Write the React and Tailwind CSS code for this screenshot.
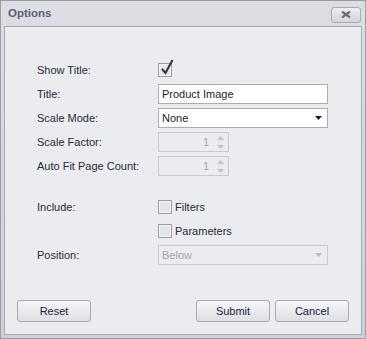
import React from 'react';

const font = { fontFamily: '"Liberation Sans", Arial, sans-serif' };

function Label({ children }) {
    return <div className="flex items-center h-[20px] text-[11px] text-[#272a38]">{children}</div>;
}

function TextBox({ value }) {
    return (
        <div className="flex items-center h-[20px] w-[170px] bg-white border border-[#abadb5] px-[3px] text-[11px] text-[#1f2230]">
            {value}
        </div>
    );
}

function Combo({ value, disabled }) {
    return (
        <div
            className={`flex items-center justify-between h-[20px] w-[170px] border px-[3px] text-[11px] ${
                disabled ? 'bg-[#ebecef] border-[#c9cbd1] text-[#a4a7b2]' : 'bg-white border-[#abadb5] text-[#1f2230]'
            }`}
        >
            <span>{value}</span>
            <svg width="7" height="4" viewBox="0 0 7 4" className="mr-[2px]">
                <path d="M0 0 H7 L3.5 4 Z" fill={disabled ? '#b8bac2' : '#1c1e2a'} />
            </svg>
        </div>
    );
}

function Spin({ value }) {
    return (
        <div className="flex items-center h-[20px] w-[71px] border border-[#c9cbd1] bg-[#ebecef] text-[11px] text-[#a4a7b2]">
            <span className="flex-1 text-right pr-[4px]">{value}</span>
            <div className="flex flex-col items-center justify-center gap-[5px] w-[15px] h-full">
                <svg width="7" height="4" viewBox="0 0 7 4">
                    <path d="M0 4 H7 L3.5 0 Z" fill="#c3c5cc" />
                </svg>
                <svg width="7" height="4" viewBox="0 0 7 4">
                    <path d="M0 0 H7 L3.5 4 Z" fill="#c3c5cc" />
                </svg>
            </div>
        </div>
    );
}

function Check({ checked, label }) {
    return (
        <div className="flex items-center h-[20px] gap-[3px] text-[11px] text-[#272a38]">
            <div className="relative w-[14px] h-[14px] border border-[#9c9ea6] bg-[#e4e5e9] shadow-[inset_0_0_0_1px_#f4f4f6]">
                {checked && (
                    <svg width="14" height="18" viewBox="0 0 14 18" className="absolute left-[1px] top-[-6px]">
                        <path d="M2 11 L5.5 15 L12.5 2" fill="none" stroke="#30323f" strokeWidth="2" />
                    </svg>
                )}
            </div>
            {label && <span>{label}</span>}
        </div>
    );
}

function Button({ children }) {
    return (
        <button className="h-[22px] w-[74px] rounded-[3px] border border-[#a9abb3] bg-gradient-to-b from-[#f6f6f8] to-[#dedfe3] text-[11px] text-[#1f2244]">
            {children}
        </button>
    );
}

export default function App() {
    return (
        <div style={font} className="w-[366px] h-[339px] flex flex-col border border-[#9a9da6] bg-gradient-to-b from-[#dcdee3] to-[#cfd1d7]">
            <div className="flex items-center justify-between h-[25px] pl-[7px] pr-[4px]">
                <span className="text-[11.5px] font-bold text-[#5a6076]">Options</span>
                <div className="flex items-center justify-center w-[30px] h-[16px] mt-[2px] rounded-[3px] border border-[#a9abb3] bg-gradient-to-b from-[#ecedf0] to-[#d3d5da]">
                    <svg width="10" height="7" viewBox="0 0 10 7">
                        <path d="M1 0.5 L9 6.5 M9 0.5 L1 6.5" stroke="#6a6d79" strokeWidth="2.2" />
                    </svg>
                </div>
            </div>
            <div className="flex-1 flex flex-col mx-[3px] mb-[3px] border border-[#a8aab2] bg-[#ebecf0]">
                <div className="grid grid-cols-[121px_170px] gap-y-[4px] pl-[32px] pt-[33px]">
                    <Label>Show Title:</Label>
                    <Check checked />
                    <Label>Title:</Label>
                    <TextBox value="Product Image" />
                    <Label>Scale Mode:</Label>
                    <Combo value="None" />
                    <Label>Scale Factor:</Label>
                    <Spin value="1" />
                    <Label>Auto Fit Page Count:</Label>
                    <Spin value="1" />
                    <div className="col-span-2 h-[13px]" />
                    <Label>Include:</Label>
                    <Check label="Filters" />
                    <div />
                    <Check label="Parameters" />
                    <Label>Position:</Label>
                    <Combo value="Below" disabled />
                </div>
                <div className="flex-1" />
                <div className="flex items-center pl-[12px] pr-[12px] pb-[12px]">
                    <Button>Reset</Button>
                    <div className="flex-1" />
                    <div className="flex gap-[5px]">
                        <Button>Submit</Button>
                        <Button>Cancel</Button>
                    </div>
                </div>
            </div>
        </div>
    );
}
